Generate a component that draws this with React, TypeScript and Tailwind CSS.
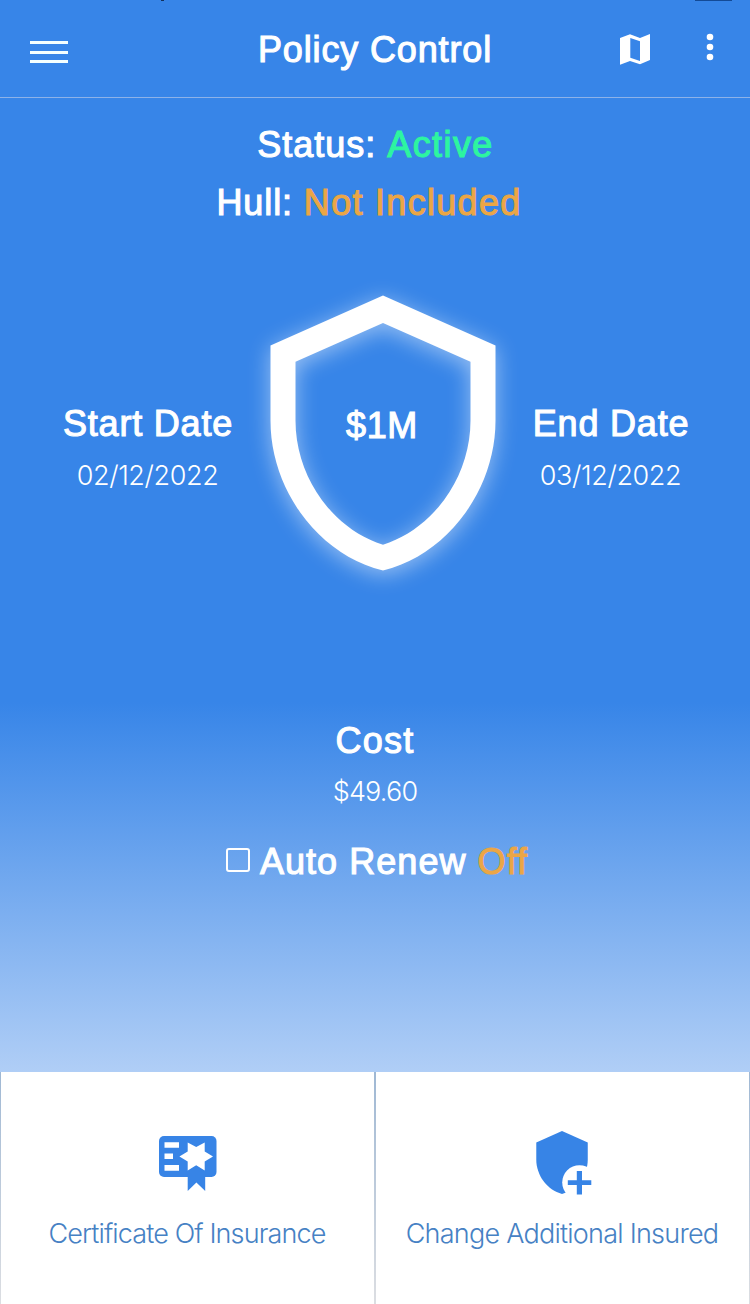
import type { ReactNode } from 'react';

const MEDIUM =
  "whitespace-nowrap font-['Liberation_Sans',Arial,sans-serif] text-[36px] leading-[44px] [-webkit-text-stroke:1.1px_currentColor]";
const LIGHT = "whitespace-nowrap font-['Inter',sans-serif] font-light text-[27px] leading-[36px]";

function MapIcon() {
  return (
    <svg width="30" height="32" viewBox="0 0 30 32" fill="currentColor" aria-hidden="true">
      <path
        fillRule="evenodd"
        d="M0 5 10 1.3 20 5 30 1v26L20 31.2 10 28 0 31.7ZM10.3 5v19.7L20 28V8.3Z"
      />
    </svg>
  );
}

function MoreIcon() {
  return (
    <svg width="8" height="28" viewBox="0 0 8 28" fill="currentColor" aria-hidden="true">
      <circle cx="4" cy="4" r="3.3" />
      <circle cx="4" cy="14" r="3.3" />
      <circle cx="4" cy="24" r="3.3" />
    </svg>
  );
}

function ShieldOutline() {
  return (
    <svg
      width="300"
      height="300"
      viewBox="0 0 24 24"
      fill="currentColor"
      className="overflow-visible [filter:drop-shadow(0_4px_11px_rgba(255,255,255,0.5))]"
      aria-hidden="true"
    >
      <path d="M12 1L3 5v6c0 5.55 3.84 10.74 9 12 5.16-1.26 9-6.45 9-12V5l-9-4zm7 10c0 4.52-2.98 8.69-7 9.93-4.02-1.24-7-5.41-7-9.93V6.3l7-3.11 7 3.11V11z" />
    </svg>
  );
}

function CertificateIcon() {
  return (
    <svg width="58" height="56" viewBox="0 0 58 56" aria-hidden="true">
      <rect width="57.5" height="41" rx="5" fill="currentColor" />
      <path d="M28.7 38h17.5v17L37.4 46.5l-8.7 8.5Z" fill="currentColor" />
      <path
        fill="#fff"
        d="M5.5 6.3H20v5.4H5.5ZM5.5 17.5H14V23H5.500ZM5.500 29H20v5.700H5.500ZM28.700 6.500l8.500 4.500 8.500-4.500v9l8.300 5-8.300 5v9l-8.500-5.300-8.500 5.300v-9l-8.300-5 8.300-5Z"
      />
    </svg>
  );
}

function ShieldPlusIcon() {
  return (
    <svg width="56" height="65" viewBox="0 0 56 65" aria-hidden="true">
      <path
        fill="currentColor"
        transform="translate(-8.3 -2.86) scale(2.86)"
        d="M12 1L3 5v6c0 5.55 3.84 10.74 9 12 5.16-1.26 9-6.45 9-12V5l-9-4z"
      />
      <circle cx="43.5" cy="51.5" r="17.3" fill="#fff" />
      <path fill="currentColor" d="M40.8 40h5.2v9.2h9.3v4.8H46v9.500h-5.200V54h-9v-4.800h9Z" />
    </svg>
  );
}

function DateBlock({ label, value }: { label: string; value: string }) {
  return (
    <div className="flex flex-col items-center">
      <span className={`${MEDIUM} pl-px tracking-[0.8px]`}>{label}</span>
      <span className={`${LIGHT} mt-[12px] tracking-[-0.4px]`}>{value}</span>
    </div>
  );
}

function ActionTile({ icon, children }: { icon: ReactNode; children: ReactNode }) {
  return (
    <button
      type="button"
      className="flex flex-1 flex-col items-center bg-white text-[#3784e6]"
    >
      <span className="flex h-[144px] items-center pt-[38px]">{icon}</span>
      <span className={`${LIGHT} pr-px text-[#4681c4]`}>{children}</span>
    </button>
  );
}

export default function App() {
  return (
    <div className="flex h-[1304px] w-[750px] flex-col overflow-hidden bg-[#3785e8] text-white">
      <header className="relative flex h-[98px] shrink-0 items-start border-b border-[#8db2e8]">
        <span className="absolute top-0 left-[161px] h-px w-[3px] bg-[#12305c]" />
        <span className="absolute top-0 left-[695px] h-px w-[37px] bg-[#134a96]" />
        <button type="button" aria-label="Menu" className="mt-[41px] ml-[30px] flex w-[38px] flex-col gap-[6.5px]">
          <span className="h-[3px] w-full bg-[#f4ffff]" />
          <span className="h-[3px] w-full bg-[#f4ffff]" />
          <span className="h-[3px] w-full bg-[#f4ffff]" />
        </button>
        <h1 className={`${MEDIUM} mt-[28px] ml-[190px] w-[234px] tracking-[0.85px]`}>Policy Control</h1>
        <button type="button" aria-label="Map" className="mt-[33px] ml-[128px]">
          <MapIcon />
        </button>
        <button type="button" aria-label="More" className="mt-[33px] ml-[56px]">
          <MoreIcon />
        </button>
      </header>

      <main className="flex h-[974px] shrink-0 flex-col bg-[linear-gradient(to_bottom,#3785e8_0px,#3785e8_604px,#b0cef6_974px)]">
        <p className={`${MEDIUM} mt-[25px] pl-[1px] text-center tracking-[1px]`}>
          Status: <span className="tracking-[1.4px] text-[#2df5a0]">Active</span>
        </p>
        <p className={`${MEDIUM} mt-[14px] pr-[12px] text-center tracking-[0.9px]`}>
          Hull: <span className="tracking-[1.3px] text-[#eba646]">Not Included</span>
        </p>

        <section className="mt-[58px] flex h-[300px] justify-center">
          <div className="mt-[119px] flex w-[232px] justify-center pl-[62px]">
            <DateBlock label="Start Date" value="02/12/2022" />
          </div>
          <div className="grid w-[300px] place-items-center">
            <div className="col-start-1 row-start-1">
              <ShieldOutline />
            </div>
            <span className={`${MEDIUM} col-start-1 row-start-1 pr-[1px] pb-[15px] tracking-[0.7px]`}>$1M</span>
          </div>
          <div className="mt-[119px] flex w-[217px] justify-center pr-[61px]">
            <DateBlock label="End Date" value="03/12/2022" />
          </div>
        </section>

        <section className="mt-[136px] flex flex-col items-center">
          <span className={`${MEDIUM} tracking-[1.2px]`}>Cost</span>
          <span className={`${LIGHT} mt-[11px] tracking-[-0.8px]`}>$49.60</span>
          <label className="mt-[30px] flex items-center gap-[10px] pl-[4px]">
            <input
              type="checkbox"
              className="mb-[4px] size-[24px] appearance-none rounded-[3px] border-[2.5px] border-white"
            />
            <span className={`${MEDIUM} tracking-[1.05px]`}>
              Auto Renew <span className="text-[#eba646]">Off</span>
            </span>
          </label>
        </section>
      </main>

      <footer className="flex flex-1 gap-[2px] bg-[linear-gradient(to_bottom,#9fb8d4,#dcdee2)] px-px">
        <ActionTile
          icon={
            <span className="pt-[2px]">
              <CertificateIcon />
            </span>
          }
        >
          <span className="tracking-[-0.88px]">Certificate Of Insurance</span>
        </ActionTile>
        <ActionTile
          icon={
            <span className="pl-[3px]">
              <ShieldPlusIcon />
            </span>
          }
        >
          <span className="tracking-[-0.76px]">Change Additional Insured</span>
        </ActionTile>
      </footer>
    </div>
  );
}
